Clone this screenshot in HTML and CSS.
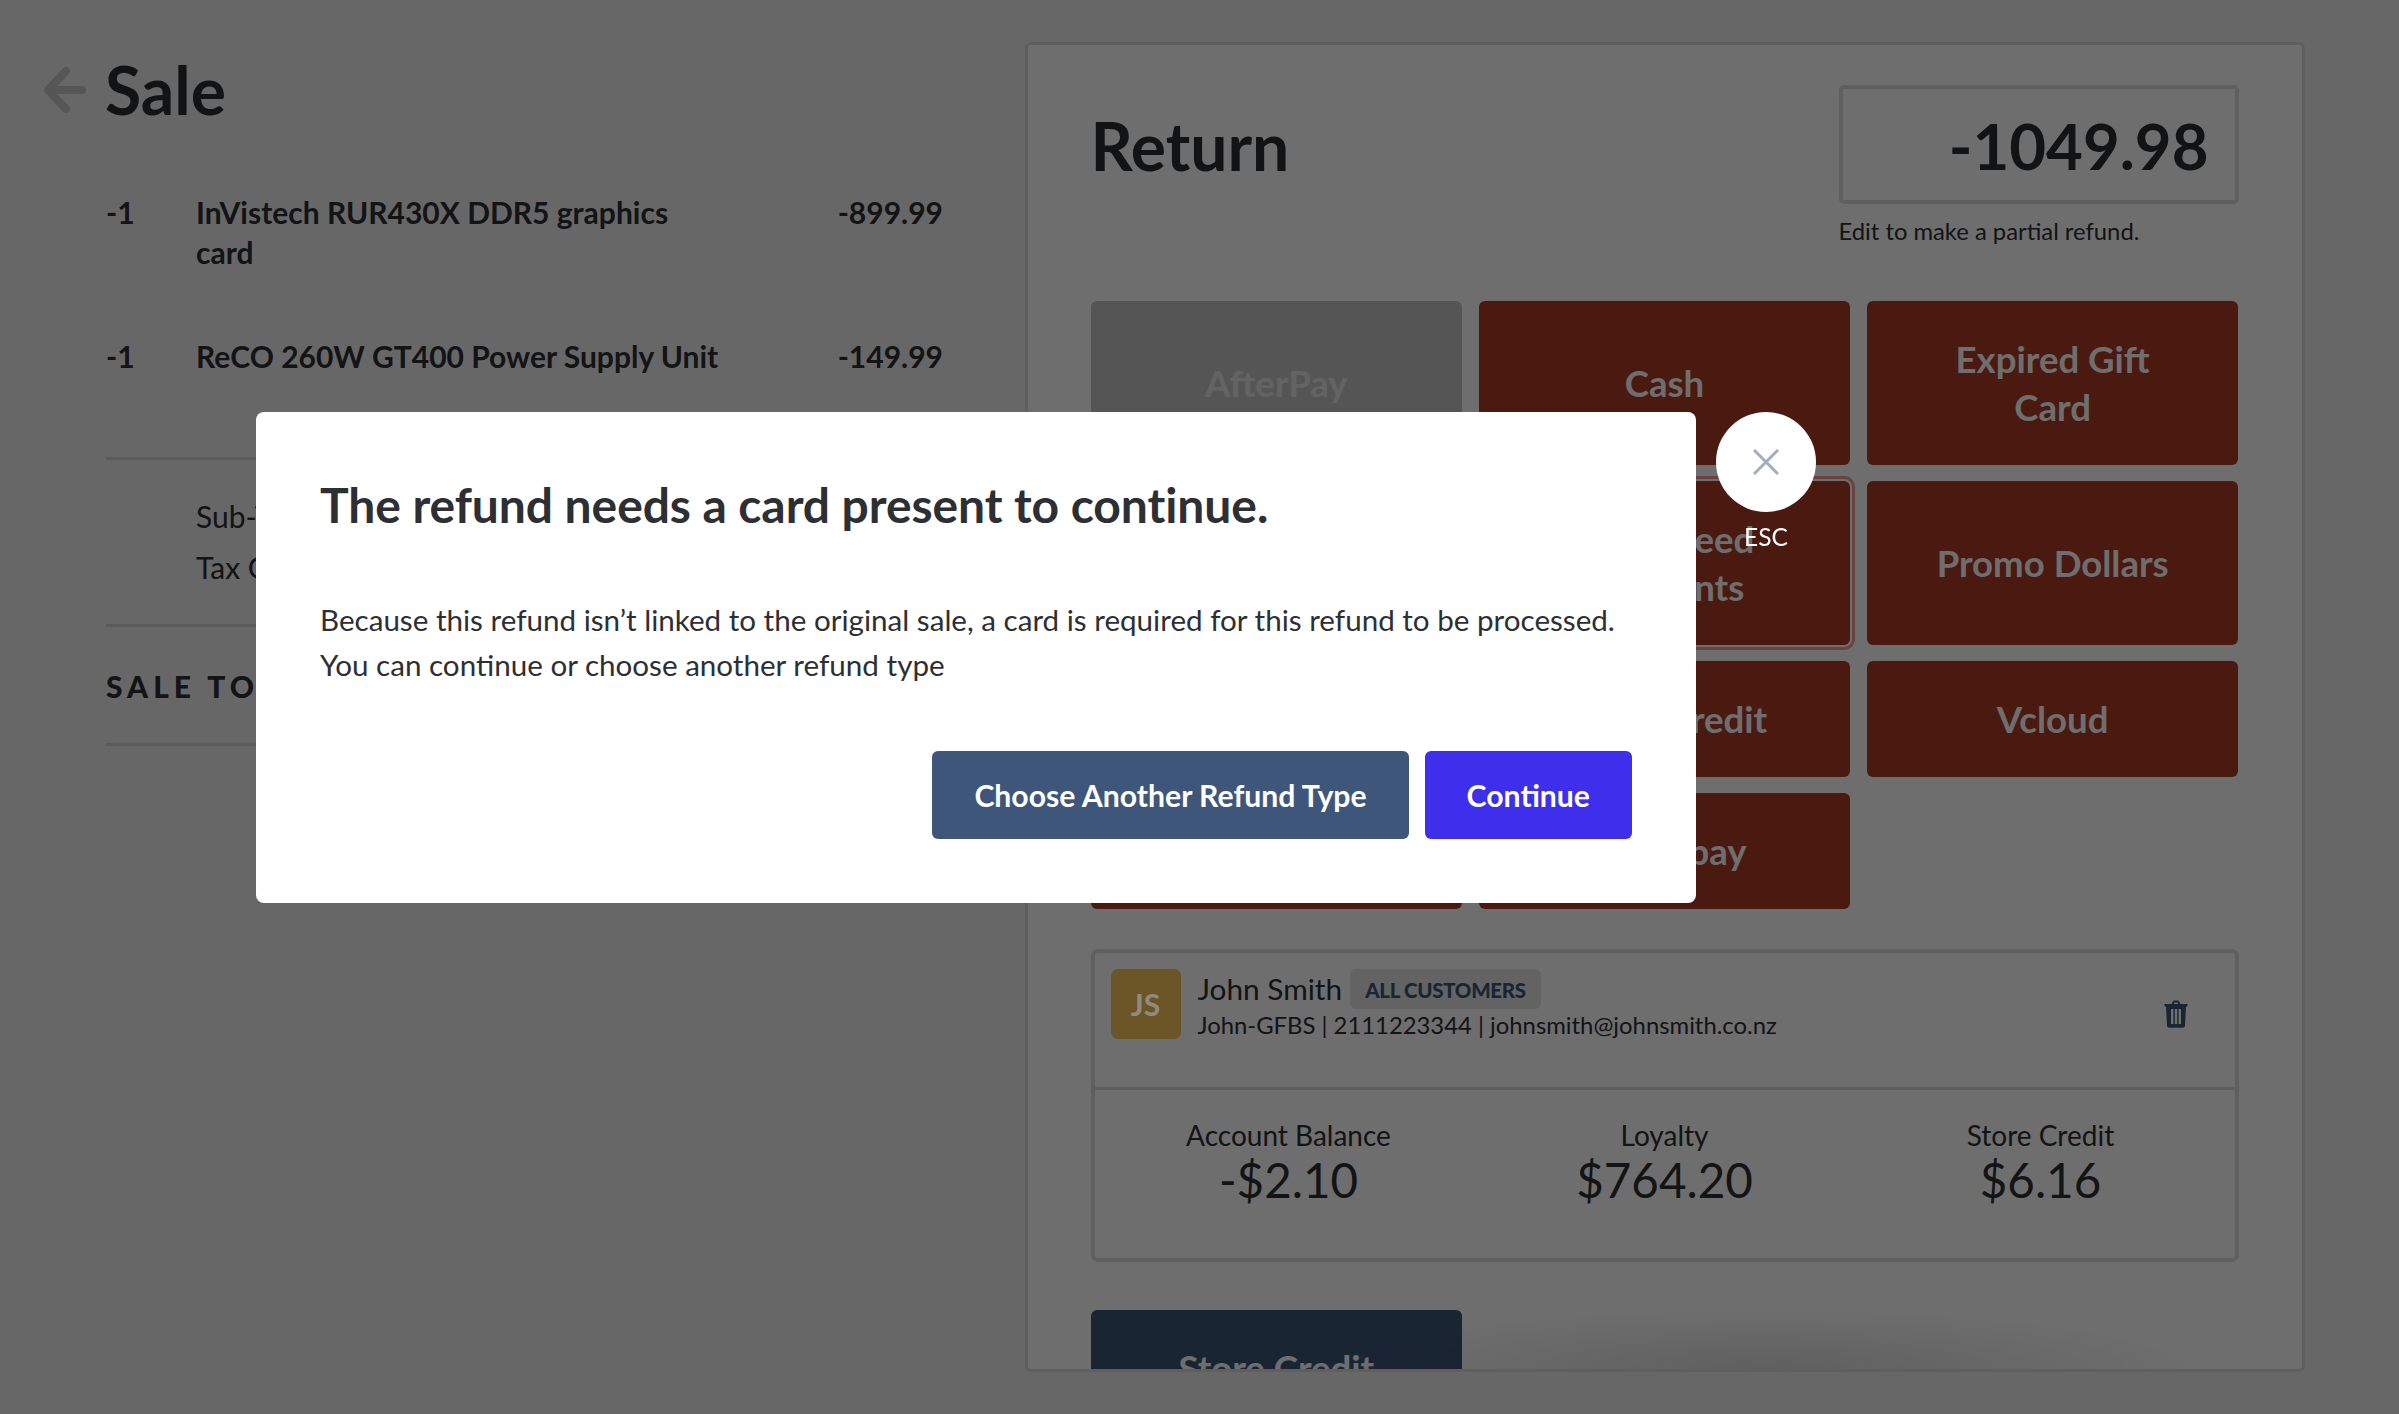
FILE: index.html
```html
<!DOCTYPE html>
<html lang="en">
<head>
<meta charset="utf-8">
<title>Sale - Return</title>
<link rel="stylesheet" href="styles.css">
</head>
<body>
<main class="page">
  <section class="sale">
    <header class="sale-head">
      <svg class="back" viewBox="0 0 42 48" aria-hidden="true"><path d="M22 5 4 24l18 19M6 24h32" fill="none" stroke="currentColor" stroke-width="8" stroke-linecap="round" stroke-linejoin="round"/></svg>
      <h1 class="sale-title">Sale</h1>
    </header>
    <ul class="lines">
      <li class="line"><span class="qty">-1</span><span class="name">InVistech RUR430X DDR5 graphics card</span><span class="price">-899.99</span></li>
      <li class="line"><span class="qty">-1</span><span class="name">ReCO 260W GT400 Power Supply Unit</span><span class="price">-149.99</span></li>
    </ul>
    <div class="sums">
      <div class="sum"><span>Sub-Total</span><span>-912.99</span></div>
      <div class="sum"><span>Tax GST</span><span>-136.99</span></div>
    </div>
    <div class="total"><span>SALE TOTAL</span><span>-1049.98</span></div>
  </section>
  <section class="panel">
    <div class="return-head">
      <h2 class="return-title">Return</h2>
      <div class="amount-box">
        <div class="amount">-1049.98</div>
        <p class="hint">Edit to make a partial refund.</p>
      </div>
    </div>
    <div class="types">
      <button class="type disabled">AfterPay</button>
      <button class="type">Cash</button>
      <button class="type">Expired Gift<br>Card</button>
      <button class="type">Eftpos</button>
      <button class="type focus">Pre-agreed<br>Payments</button>
      <button class="type">Promo Dollars</button>
      <button class="type">Laybuy</button>
      <button class="type">Other Credit</button>
      <button class="type">Vcloud</button>
      <button class="type">Visa</button>
      <button class="type">Genoapay</button>
    </div>
    <article class="customer">
      <div class="cust-top">
        <div class="avatar">JS</div>
        <div class="cust-info">
          <div class="cust-name"><span>John Smith</span><span class="tag">ALL CUSTOMERS</span></div>
          <div class="cust-meta">John-GFBS | 2111223344 | johnsmith@johnsmith.co.nz</div>
        </div>
        <svg class="trash" viewBox="0 0 24 28" aria-hidden="true"><path fill="currentColor" fill-rule="evenodd" d="M8 3.500C8 1.600 9.400.5 11 .5h2c1.600 0 3 1.100 3 3V4h6.500a1 1 0 0 1 0 2.400H22L21 25.500c-.1 1.300-1 2.200-2.300 2.200H5.300c-1.300 0-2.200-.9-2.300-2.200L2 6.400h-.5a1 1 0 0 1 0-2.400H8ZM10 4h4v-.5c0-.6-.4-1-1-1h-2c-.6 0-1 .4-1 1ZM7 9v15h2.400V9Zm3.800 0v15h2.400V9Zm3.800 0v15H17V9Z"/></svg>
      </div>
      <div class="stats">
        <div class="stat"><span class="stat-label">Account Balance</span><span class="stat-value">-$2.10</span></div>
        <div class="stat"><span class="stat-label">Loyalty</span><span class="stat-value">$764.20</span></div>
        <div class="stat"><span class="stat-label">Store Credit</span><span class="stat-value">$6.16</span></div>
      </div>
    </article>
    <div class="types extra">
      <button class="type navy">Store Credit</button>
    </div>
    <div class="fade"></div>
  </section>
</main>
<div class="overlay">
  <div class="dialog">
    <h3 class="dialog-title">The refund needs a card present to continue.</h3>
    <p class="dialog-body">Because this refund isn’t linked to the original sale, a card is required for this refund to be processed.<br>You can continue or choose another refund type</p>
    <div class="dialog-actions">
      <button class="action secondary">Choose Another Refund Type</button>
      <button class="action primary">Continue</button>
    </div>
  </div>
  <div class="close-wrap">
    <button class="close" aria-label="Close">
      <svg viewBox="0 0 26 26" aria-hidden="true"><path d="M1 1l24 24M25 1 1 25" fill="none" stroke="currentColor" stroke-width="3"/></svg>
    </button>
    <span class="esc">ESC</span>
  </div>
</div>
</body>
</html>
```
FILE: styles.css
```css
* { box-sizing: border-box; }
html, body { margin: 0; height: 100%; }
body {
  font-family: Lato, "Liberation Sans", sans-serif;
  background: #eeeeee;
  color: #2d2f33;
  overflow: hidden;
}
button { font-family: inherit; border: 0; }
h1, h2, h3, p, ul { margin: 0; padding: 0; }
ul { list-style: none; }

.page { display: flex; height: 1414px; align-items: flex-start; padding-top: 42px; }

.sale { width: 1024.500px; padding: 0 81.500px 0 44px; flex: none; }
.sale-head { display: flex; align-items: center; gap: 19px; height: 96px; }
.back { width: 42px; height: 48px; color: #c7c7c7; flex: none; }
.sale-title { font-size: 66px; font-weight: 700; line-height: 1; color: #2b2d31; }
.lines { margin: 54px 0 0 62px; }
.line { display: grid; grid-template-columns: 90px 525px 1fr; font-size: 30px; font-weight: 700; line-height: 40px; min-height: 144px; }
.line + .line { min-height: 121px; }
.price { text-align: right; }
.sums { margin-left: 62px; border-top: 3px solid #d4d4d4; padding: 31px 0 0 90px; height: 170px; border-bottom: 3px solid #d4d4d4; }
.sum { display: flex; justify-content: space-between; font-size: 30px; line-height: 51px; }
.total { margin-left: 62px; display: flex; justify-content: space-between; font-size: 30px; font-weight: 900; letter-spacing: 5px; height: 119px; padding-top: 37px; line-height: 44px; border-bottom: 3px solid #d4d4d4; }

.panel { position: relative; width: 1280px; height: 1330px; background: #fff; border: 3px solid #dddddd; border-radius: 6px; padding: 40px 63px 0; overflow: hidden; flex: none; }
.return-head { display: flex; justify-content: space-between; height: 216px; }
.return-title { font-size: 66px; font-weight: 700; line-height: 1; margin-top: 28px; color: #2b2d31; }
.amount-box { width: 400px; }
.amount { height: 119px; border: 4px solid #dcdcdc; border-radius: 5px; text-align: right; padding: 0 26px; font-size: 63.500px; font-weight: 700; line-height: 114px; color: #2b2d31; }
.hint { margin-top: 12px; font-size: 23.800px; line-height: 30px; }

.types { display: grid; grid-template-columns: repeat(3, 1fr); column-gap: 16.500px; row-gap: 16px; }
.type { background: #ab3a26; color: #fff; font-size: 36.600px; font-weight: 700; line-height: 48px; padding: 34px 10px; border-radius: 6px; }
.type.disabled { background: #c6c6c6; color: #e6e6e6; }
.type.focus { outline: 3px solid #f59a93; outline-offset: 2px; }
.type.navy { background: #3d5679; }

.customer { margin-top: 40px; height: 313px; border: 4px solid #dcdcdc; border-radius: 7px; }
.cust-top { display: flex; height: 137px; padding: 16px 47px 0 16px; border-bottom: 3px solid #dcdcdc; gap: 17px; align-items: flex-start; }
.avatar { position: relative; z-index: 2; width: 70px; height: 70px; border-radius: 7px; background: #6c5627; color: #908b80; font-weight: 700; display: flex; align-items: center; justify-content: center; font-size: 30px; }
.cust-info { flex: 1; }
.cust-name { display: flex; align-items: center; gap: 8px; font-size: 29.800px; line-height: 40px; }
.tag { background: #e6e6e6; color: #3d5679; font-size: 20.500px; font-weight: 900; letter-spacing: -.3px; border-radius: 6px; padding: 0 15px; height: 40px; line-height: 42px; }
.cust-meta { font-size: 23.850px; line-height: 30px; margin-top: 1px; }
.trash { width: 24px; height: 28px; color: #3d5679; margin-top: 31px; }
.stats { display: grid; grid-template-columns: repeat(3, 376px); padding: 27px 0 0 6px; }
.stat { display: flex; flex-direction: column; align-items: center; }
.stat-label { font-size: 28px; line-height: 36px; }
.stat-value { font-size: 47.500px; line-height: 54px; }

.extra { margin-top: 48px; }
.fade { position: absolute; left: 300px; right: 100px; bottom: 0; height: 60px; background: radial-gradient(ellipse 50% 100% at 50% 100%, rgba(0,0,0,.13), rgba(0,0,0,0)); pointer-events: none; }

.overlay { position: fixed; z-index: 1; inset: 0; background: rgba(0,0,0,.57); }
.dialog { position: absolute; left: 256px; top: 412px; width: 1440px; height: 491px; background: #fff; border-radius: 8px; padding: 64px; color: #2d2f33; }
.dialog-title { font-size: 48px; font-weight: 700; line-height: 58px; letter-spacing: -.08px; }
.dialog-body { margin-top: 63px; font-size: 29.600px; line-height: 45px; white-space: nowrap; }
.dialog-actions { display: flex; justify-content: flex-end; gap: 16px; margin-top: 64px; }
.action { height: 88px; color: #fff; font-size: 30.200px; font-weight: 700; padding: 0 42px; border-radius: 6px; }
.secondary { background: #3d5679; }
.primary { background: #3d2fec; }
.close-wrap { position: absolute; left: 1716px; top: 412px; width: 100px; display: flex; flex-direction: column; align-items: center; }
.close { width: 100px; height: 100px; border-radius: 50%; background: #fff; color: #a0aec0; display: flex; align-items: center; justify-content: center; padding: 0; }
.close svg { width: 26px; height: 26px; }
.esc { color: #fff; font-size: 24.500px; line-height: 30px; margin-top: 10px; }
```
